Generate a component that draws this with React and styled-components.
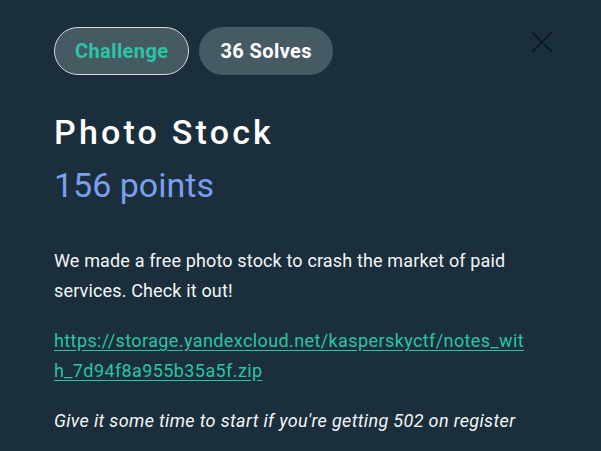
import React from "react";
import styled, { createGlobalStyle } from "styled-components";

const GlobalStyle = createGlobalStyle`
  html, body { margin: 0; padding: 0; background: #1a2e3b; }
  body { font-family: Roboto, "Noto Sans", sans-serif; -webkit-font-smoothing: antialiased; }
`;

const Modal = styled.div`
  box-sizing: border-box;
  width: 601px;
  height: 451px;
  overflow: hidden;
  background: #1a2e3b;
  padding: 27px 49px 0 54px;
  color: #ffffff;
`;

const Header = styled.div`
  display: flex;
  justify-content: space-between;
  align-items: flex-start;
`;

const Badges = styled.div`
  display: flex;
  gap: 10px;
`;

const Badge = styled.span`
  box-sizing: border-box;
  height: 48px;
  display: inline-flex;
  align-items: center;
  padding: 0 20px;
  border-radius: 24px;
  background: #465a63;
  border: ${(p) => (p.$outlined ? "1px solid #d3d9db" : "1px solid transparent")};
  color: ${(p) => (p.$outlined ? "#29c5a5" : "#ffffff")};
  font-size: 20px;
  font-weight: 700;
  letter-spacing: 0.4px;
`;

const CloseButton = styled.button`
  margin-top: 5px;
  width: 20px;
  height: 20px;
  padding: 0;
  border: 0;
  background: none;
  cursor: pointer;
  display: block;
`;

const Content = styled.div`
  width: 472px;
`;

const Title = styled.h2`
  margin: 37px 0 0;
  font-size: 34px;
  line-height: 40px;
  font-weight: 500;
  letter-spacing: 3.2px;
  color: #ffffff;
`;

const Points = styled.div`
  margin-top: 13px;
  font-size: 34px;
  line-height: 40px;
  font-weight: 400;
  color: #7b9ef0;
`;

const Description = styled.div`
  margin-top: 41px;
`;

const Paragraph = styled.p`
  margin: 0 0 20px;
  font-size: 18px;
  line-height: 30px;
  letter-spacing: ${(p) => (p.$italic ? 0.35 : 0.15)}px;
  color: #f4f6f7;
  font-style: ${(p) => (p.$italic ? "italic" : "normal")};
`;

const Link = styled.a`
  color: #29c5a5;
  letter-spacing: 0.4px;
  text-decoration: underline;
  text-underline-offset: 3px;
  word-break: break-all;
`;

export default function App() {
  return (
    <>
      <GlobalStyle />
      <Modal>
        <Header>
          <Badges>
            <Badge $outlined>Challenge</Badge>
            <Badge>36 Solves</Badge>
          </Badges>
          <CloseButton aria-label="Close">
            <svg width="20" height="20" viewBox="0 0 20 20">
              <path d="M1 1 L19 19 M19 1 L1 19" stroke="#0e1b24" strokeWidth="2" strokeLinecap="round" />
            </svg>
          </CloseButton>
        </Header>
        <Content>
          <Title>Photo Stock</Title>
          <Points>156 points</Points>
          <Description>
            <Paragraph>
              We made a free photo stock to crash the market of paid services. Check it out!
            </Paragraph>
            <Paragraph>
              <Link href="#">https://storage.yandexcloud.net/kasperskyctf/notes_with_7d94f8a955b35a5f.zip</Link>
            </Paragraph>
            <Paragraph $italic>Give it some time to start if you're getting 502 on register</Paragraph>
          </Description>
        </Content>
      </Modal>
    </>
  );
}
